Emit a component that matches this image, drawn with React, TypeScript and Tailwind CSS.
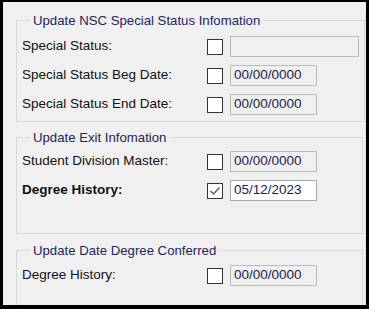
const font = { fontFamily: '"Liberation Sans", Arial, sans-serif' };

type Row = {
  label: string;
  value: string;
  checked?: boolean;
  bold?: boolean;
  wide?: boolean;
};

const groups: { title: string; rows: Row[]; pt: string; pb: string; mt: string }[] = [
  {
    title: "Update NSC Special Status Infomation",
    pt: "pt-[4px]",
    pb: "pb-[2px]",
    mt: "mt-[11px]",
    rows: [
      { label: "Special Status:", value: "", wide: true },
      { label: "Special Status Beg Date:", value: "00/00/0000" },
      { label: "Special Status End Date:", value: "00/00/0000" },
    ],
  },
  {
    title: "Update Exit Infomation",
    pt: "pt-[2px]",
    pb: "pb-[28px]",
    mt: "mt-[8px]",
    rows: [
      { label: "Student Division Master:", value: "00/00/0000" },
      { label: "Degree History:", value: "05/12/2023", checked: true, bold: true },
    ],
  },
  {
    title: "Update Date Degree Conferred",
    pt: "pt-[3px]",
    pb: "pb-[40px]",
    mt: "mt-[9px]",
    rows: [{ label: "Degree History:", value: "00/00/0000" }],
  },
];

function CheckBox({ checked }: { checked?: boolean }) {
  return (
    <div className="w-[16px] h-[16px] border border-[#333333] bg-white flex items-center justify-center shrink-0">
      {checked && (
        <svg width="12" height="10" viewBox="0 0 12 10">
          <polyline points="1.5,5 4.5,8 10.5,1.5" fill="none" stroke="#5a5a5a" strokeWidth="1.4" />
        </svg>
      )}
    </div>
  );
}

function DateRow({ row }: { row: Row }) {
  const enabled = row.checked;
  return (
    <div className="h-[29px] flex items-center">
      <div className={`w-[185px] text-[13.5px] text-[#111] ${row.bold ? "font-bold" : ""}`}>{row.label}</div>
      <CheckBox checked={row.checked} />
      <div
        className={`ml-[7px] h-[21px] flex items-center px-[3px] text-[13.5px] text-[#1c1c4a] border ${
          row.wide ? "w-[129px]" : "w-[87px]"
        } ${enabled ? "bg-white border-[#a8a8a8]" : "bg-[#f0f0f0] border-[#bcbcbc]"}`}
      >
        {row.value}
      </div>
    </div>
  );
}

export default function App() {
  return (
    <div
      className="w-[369px] h-[309px] bg-[#f0f0f0] border-l-[3px] border-t-[2px] border-r-[3px] border-b-[4px] border-black overflow-hidden"
      style={font}
    >
      <div className="pl-[13px] pr-[2px] h-full border-r border-[#e4e4e4]">
        {groups.map((g) => (
          <fieldset key={g.title} className={`border border-[#d9d9d9] px-[5px] ${g.mt} ${g.pt} ${g.pb}`}>
            <legend className="ml-[8px] px-[3px] text-[13.2px] leading-[15px] text-[#24245a]">{g.title}</legend>
            {g.rows.map((r) => (
              <DateRow key={r.label + r.value} row={r} />
            ))}
          </fieldset>
        ))}
      </div>
    </div>
  );
}
